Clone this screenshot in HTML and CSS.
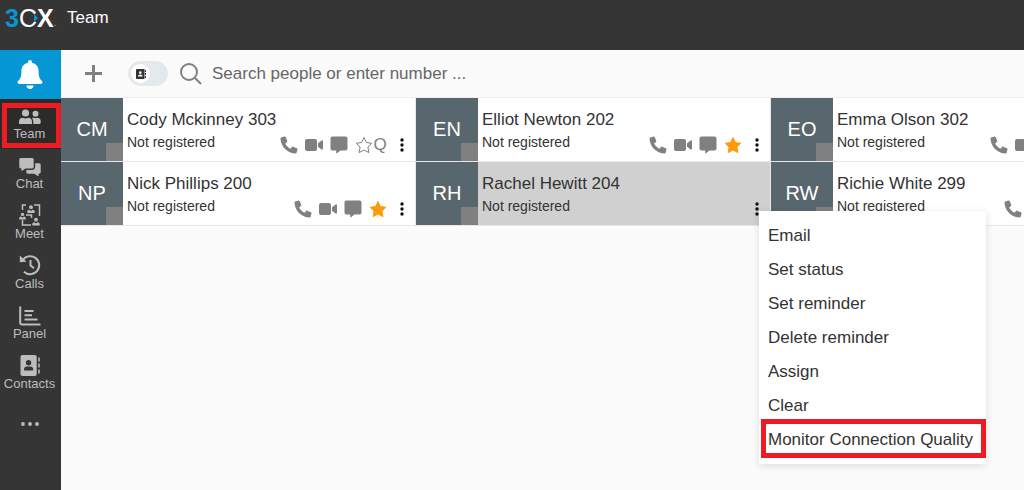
FILE: index.html
```html
<!DOCTYPE html>
<html lang="en">

<head>
    <meta charset="UTF-8">
    <meta name="viewport" content="width=device-width, initial-scale=1.0">
    <title>3CX - Team</title>
    <link rel="stylesheet" href="styles.css">
</head>

<body>

    <!-- Shared icons -->
    <svg class="sprite" aria-hidden="true">
        <symbol id="i-phone" viewBox="0 0 18 18">
            <path d="M1.2 1.4 4.6.5c.5-.1.9.1 1.1.6l1.6 3.8c.2.4.1.8-.3 1.1L5.200 7.500c1.100 2.300 3 4.200 5.300 5.300l1.500-1.800c.3-.4.7-.5 1.100-.3l3.800 1.600c.5.2.7.6.6 1.100l-.9 3.400c-.1.5-.4.7-.9.7C7.500 17.500.5 10.500.5 2.300c0-.4.3-.8.7-.9Z"/>
        </symbol>
        <symbol id="i-video" viewBox="0 0 18 18">
            <rect x="0" y="3" width="12" height="12" rx="2"/>
            <path d="M13 7.300 16.600 4.500c.6-.4 1.400 0 1.400.7v7.600c0 .7-.8 1.100-1.400.7L13 10.700Z"/>
        </symbol>
        <symbol id="i-chat" viewBox="0 0 18 18">
            <path d="M2.500.5h13c1.200 0 2 .8 2 2v10c0 1.200-.8 2-2 2h-5L7 17.200c-.4.3-.8.100-.8-.4v-2.300H2.500c-1.200 0-2-.8-2-2v-10c0-1.200.8-2 2-2Z"/>
        </symbol>
        <symbol id="i-star" viewBox="0 0 18 18">
            <path stroke-linejoin="round" d="m9 1.500 2.400 5 5.400.8-3.900 3.800 1 5.500L9 14l-4.900 2.600 1-5.500-3.900-3.800 5.400-.8Z"/>
        </symbol>
        <symbol id="i-dots" viewBox="0 0 4 14">
            <circle cx="2" cy="2" r="1.700"/>
            <circle cx="2" cy="7" r="1.700"/>
            <circle cx="2" cy="12" r="1.700"/>
        </symbol>
        <symbol id="i-person" viewBox="0 0 8 8">
            <circle cx="4" cy="2.200" r="1.900"/>
            <path d="M.3 8V6.700C.3 5.500 1.200 4.700 2.300 4.700L4 6l1.700-1.300c1.100 0 2 .8 2 2V8Z"/>
        </symbol>
    </svg>

    <header class="topbar">
        <a href="#" class="logo" aria-label="3CX"><span class="logo-3">3</span><span class="logo-c">C</span><span class="logo-x">X</span><span class="logo-dot">.</span></a>
        <h1>Team</h1>
    </header>

    <div class="layout">
        <nav class="sidebar">
            <button class="bell" aria-label="Notifications">
                <svg width="26" height="30" viewBox="0 0 26 30">
                    <path d="M13 0c1.200 0 2 .8 2 2v.8c4 .9 6.600 4 6.600 8.200 0 5.500 1 7.700 3.100 9.800.5.500.8 1 .8 1.500 0 .9-.7 1.700-1.800 1.700H2.300C1.200 24 .5 23.200.5 22.300c0-.5.300-1 .8-1.500 2.100-2.100 3.100-4.300 3.100-9.800 0-4.200 2.600-7.300 6.600-8.200V2c0-1.200.8-2 2-2ZM9.500 25.500h7c0 2-1.500 3.500-3.500 3.500s-3.500-1.500-3.500-3.500Z"/>
                </svg>
            </button>
            <a href="#" class="nav-item active">
                <svg width="22" height="18" viewBox="0 0 22 18">
                    <circle cx="6.500" cy="5" r="3.600"/>
                    <path d="M0 16v-2.500C0 11.300 1.600 9.800 3.800 9.800c1.700.8 3.700.8 5.400 0 2.200 0 3.800 1.500 3.800 3.700V16Z"/>
                    <circle cx="16.500" cy="5.800" r="3"/>
                    <path d="M14.300 16v-2.500c0-1.400-.4-2.500-1.200-3.300.4-.3.900-.4 1.500-.4 1.200.6 2.600.6 3.800 0 2 0 3.300 1.300 3.300 3.200v1.800c0 .7-.5 1.200-1.200 1.200Z"/>
                </svg>
                Team
            </a>
            <a href="#" class="nav-item">
                <svg width="22" height="18" viewBox="0 0 22 18">
                    <path d="M2 0h11c1 0 1.700.7 1.700 1.700v7c0 1-.7 1.700-1.700 1.700H6.500l-3.300 2.400c-.4.200-.7.100-.7-.4v-2H2c-1 0-1.700-.7-1.700-1.700v-7C.3.700 1 0 2 0Z"/>
                    <path d="M16.200 5.300H20c1 0 1.700.7 1.700 1.700v7c0 1-.7 1.700-1.700 1.700h-.5v2c0 .5-.3.600-.7.400l-3.300-2.400H9c-1 0-1.700-.7-1.700-1.700v-2H13c1.900 0 3.200-1.300 3.200-3.200Z"/>
                </svg>
                Chat
            </a>
            <a href="#" class="nav-item">
                <svg width="22" height="22" viewBox="0 0 22 22">
                    <path class="line" d="M3.500 6V1H7M15 1h5.500v11M3.500 16v5H12M7 11h5.500v3"/>
                    <use href="#i-person" x="8" y="1" width="8" height="8"/>
                    <use href="#i-person" x="0" y="8" width="7" height="8"/>
                    <use href="#i-person" x="13" y="13" width="8" height="9"/>
                </svg>
                Meet
            </a>
            <a href="#" class="nav-item">
                <svg width="22" height="22" viewBox="0 0 22 22">
                    <path class="line bold" d="M3.500 6.500A9 9 0 1 1 5 17.700"/>
                    <path class="line bold" d="M11.500 6v5.500l3.500 2.800"/>
                    <path d="M.8 1.500 7.500 7.700.8 8.300Z"/>
                </svg>
                Calls
            </a>
            <a href="#" class="nav-item">
                <svg width="22" height="20" viewBox="0 0 22 20">
                    <path class="line bold" d="M1.200.5v16c0 1.200.8 2 2 2h18.300M5.500 5h9M5.500 9.200h7.500M5.500 13.500h13"/>
                </svg>
                Panel
            </a>
            <a href="#" class="nav-item">
                <svg width="22" height="21" viewBox="0 0 22 21">
                    <path fill-rule="evenodd" d="M3.500 0h12.200c1.200 0 2 .8 2 2v17c0 1.200-.8 2-2 2H3.500c-1.200 0-2-.8-2-2V2c0-1.200.8-2 2-2Zm6.100 5a2.700 2.700 0 1 0 0 5.400 2.700 2.700 0 0 0 0-5.400ZM5 15.500h9.200v-1c0-1.700-1.200-2.900-2.900-2.900H7.900C6.200 11.600 5 12.800 5 14.500Z"/>
                    <path class="line" stroke-dasharray="4 2" d="M20 2.500v16"/>
                </svg>
                Contacts
            </a>
            <button class="more" aria-label="More">
                <svg width="18" height="4" viewBox="0 0 18 4">
                    <circle cx="2" cy="2" r="1.900"/>
                    <circle cx="9" cy="2" r="1.900"/>
                    <circle cx="16" cy="2" r="1.900"/>
                </svg>
            </button>
        </nav>

        <main class="content">
            <div class="toolbar">
                <button class="add" aria-label="Add">
                    <svg width="17" height="17" viewBox="0 0 17 17"><path d="M8.500 0v17M0 8.500h17"/></svg>
                </button>
                <label class="switch">
                    <input type="checkbox" aria-label="Show contacts">
                    <span class="knob">
                        <svg width="10" height="10" viewBox="0 0 10 10">
                            <path fill-rule="evenodd" d="M1 0h7.500v10H1a1 1 0 0 1-1-1V1a1 1 0 0 1 1-1Zm3.300 2.200a1.300 1.300 0 1 0 0 2.700 1.300 1.300 0 0 0 0-2.700ZM2 7.500h4.600c0-1.300-.8-2-2.300-2S2 6.200 2 7.500ZM9 1h1v2H9Zm0 3h1v2H9Zm0 3h1v2H9Z"/>
                        </svg>
                    </span>
                </label>
                <label class="search">
                    <svg width="22" height="22" viewBox="0 0 22 22"><circle cx="9" cy="9" r="8"/><path d="m15 15 6 6"/></svg>
                    <input type="text" placeholder="Search people or enter number ..." aria-label="Search people or enter number">
                </label>
            </div>

            <div class="people">
                <article class="card">
                    <div class="avatar">CM</div>
                    <div class="info">
                        <h2>Cody Mckinney 303</h2>
                        <p>Not registered</p>
                    </div>
                    <div class="actions">
                        <button aria-label="Call"><svg><use href="#i-phone"/></svg></button>
                        <button aria-label="Video"><svg><use href="#i-video"/></svg></button>
                        <button aria-label="Chat"><svg><use href="#i-chat"/></svg></button>
                        <span class="group">
                            <button class="star-empty" aria-label="Favorite"><svg><use href="#i-star"/></svg></button>
                            <button class="queue">Q</button>
                        </span>
                        <button class="dots" aria-label="Options"><svg><use href="#i-dots"/></svg></button>
                    </div>
                </article>

                <article class="card">
                    <div class="avatar">EN</div>
                    <div class="info">
                        <h2>Elliot Newton 202</h2>
                        <p>Not registered</p>
                    </div>
                    <div class="actions">
                        <button aria-label="Call"><svg><use href="#i-phone"/></svg></button>
                        <button aria-label="Video"><svg><use href="#i-video"/></svg></button>
                        <button aria-label="Chat"><svg><use href="#i-chat"/></svg></button>
                        <button class="star" aria-label="Favorite"><svg><use href="#i-star"/></svg></button>
                        <button class="dots" aria-label="Options"><svg><use href="#i-dots"/></svg></button>
                    </div>
                </article>

                <article class="card">
                    <div class="avatar">EO</div>
                    <div class="info">
                        <h2>Emma Olson 302</h2>
                        <p>Not registered</p>
                    </div>
                    <div class="actions">
                        <button aria-label="Call"><svg><use href="#i-phone"/></svg></button>
                        <button aria-label="Video"><svg><use href="#i-video"/></svg></button>
                        <button aria-label="Chat"><svg><use href="#i-chat"/></svg></button>
                        <span class="group">
                            <button class="star-empty" aria-label="Favorite"><svg><use href="#i-star"/></svg></button>
                            <button class="queue" aria-label="Queue"></button>
                        </span>
                        <button class="dots" aria-label="Options"><svg><use href="#i-dots"/></svg></button>
                    </div>
                </article>

                <article class="card">
                    <div class="avatar">NP</div>
                    <div class="info">
                        <h2>Nick Phillips 200</h2>
                        <p>Not registered</p>
                    </div>
                    <div class="actions">
                        <button aria-label="Call"><svg><use href="#i-phone"/></svg></button>
                        <button aria-label="Video"><svg><use href="#i-video"/></svg></button>
                        <button aria-label="Chat"><svg><use href="#i-chat"/></svg></button>
                        <button class="star" aria-label="Favorite"><svg><use href="#i-star"/></svg></button>
                        <button class="dots" aria-label="Options"><svg><use href="#i-dots"/></svg></button>
                    </div>
                </article>

                <article class="card selected">
                    <div class="avatar">RH</div>
                    <div class="info">
                        <h2>Rachel Hewitt 204</h2>
                        <p>Not registered</p>
                    </div>
                    <div class="actions">
                        <button class="dots" aria-label="Options"><svg><use href="#i-dots"/></svg></button>
                    </div>
                    <ul class="menu">
                        <li><button>Email</button></li>
                        <li><button>Set status</button></li>
                        <li><button>Set reminder</button></li>
                        <li><button>Delete reminder</button></li>
                        <li><button>Assign</button></li>
                        <li><button>Clear</button></li>
                        <li class="marked"><button>Monitor Connection Quality</button></li>
                    </ul>
                </article>

                <article class="card">
                    <div class="avatar">RW</div>
                    <div class="info">
                        <h2>Richie White 299</h2>
                        <p>Not registered</p>
                    </div>
                    <div class="actions">
                        <button aria-label="Call"><svg><use href="#i-phone"/></svg></button>
                        <button aria-label="Video"><svg><use href="#i-video"/></svg></button>
                        <button aria-label="Chat"><svg><use href="#i-chat"/></svg></button>
                        <button class="star" aria-label="Favorite"><svg><use href="#i-star"/></svg></button>
                        <button class="dots" aria-label="Options"><svg><use href="#i-dots"/></svg></button>
                    </div>
                </article>
            </div>
        </main>
    </div>

</body>

</html>
```
FILE: styles.css
```css
* {
    box-sizing: border-box;
}

body {
    margin: 0;
    min-height: 100vh;
    display: flex;
    flex-direction: column;
    font-family: "Liberation Sans", Arial, sans-serif;
    font-size: 17px;
    color: #333;
    background: #fbfbfb;
}

button {
    padding: 0;
    border: none;
    background: none;
    font: inherit;
    color: inherit;
    cursor: pointer;
}

svg {
    display: block;
    fill: currentColor;
}

.sprite {
    position: absolute;
    width: 0;
    height: 0;
}

/* Header */
.topbar {
    display: flex;
    height: 50px;
    padding: 6px 5px;
    gap: 11px;
    color: white;
    background: #353535;
}

.topbar h1 {
    margin: 0;
    font-size: 17px;
    font-weight: normal;
    line-height: 24px;
}

.logo {
    position: relative;
    display: flex;
    width: 51px;
    font-size: 25px;
    line-height: 25px;
    color: white;
    text-decoration: none;
}

.logo-3,
.logo-x {
    font-weight: bold;
}

.logo-3 {
    color: #0596d4;
}

.logo-dot {
    font-size: 10px;
    line-height: 34px;
    color: #999;
}

/* blue arrow between the C and the X */
.logo::after {
    content: "";
    position: absolute;
    top: 8px;
    left: 29px;
    border: 4px solid transparent;
    border-left-color: #0596d4;
    border-right: none;
}

/* Sidebar */
.layout {
    flex: 1;
    display: flex;
}

.sidebar {
    flex: none;
    display: flex;
    flex-direction: column;
    width: 61px;
    color: #bdbdbd;
    background: #353535;
}

.bell,
.nav-item,
.more {
    display: flex;
    justify-content: center;
    align-items: center;
    height: 50px;
    padding-right: 2px;
}

.bell {
    height: 49px;
    color: white;
    background: #0596d4;
}

.nav-item {
    position: relative;
    flex-direction: column;
    justify-content: flex-end;
    padding-bottom: 7px;
    font-size: 13px;
    line-height: 16px;
    color: #bdbdbd;
    text-decoration: none;
}

.nav-item.active {
    background: #2d2b2a;
}

.nav-item.active::after {
    content: "";
    position: absolute;
    inset: 4px 0 1px 2px;
    border: 5px solid #ed1c24;
}

.line {
    fill: none;
    stroke: currentColor;
    stroke-width: 1.5;
}

.line.bold {
    stroke-width: 2;
}

/* Toolbar */
.content {
    flex: 1;
    min-width: 0;
    overflow: hidden;
}

.toolbar {
    display: flex;
    align-items: center;
    height: 48px;
    padding: 0 24px;
    color: #808080;
    border-bottom: 1px solid #eee;
}

.add {
    margin-right: 26px;
}

.add svg,
.search svg {
    fill: none;
    stroke: currentColor;
    stroke-width: 2;
}

.add svg {
    stroke-width: 3;
}

.switch {
    display: flex;
    width: 40px;
    height: 25px;
    margin-right: 12px;
    padding: 3px;
    border-radius: 13px;
    background: #e4e9eb;
    cursor: pointer;
}

.switch input {
    position: absolute;
    opacity: 0;
    margin: 0;
}

.knob {
    display: flex;
    justify-content: center;
    align-items: center;
    width: 19px;
    height: 19px;
    border-radius: 50%;
    color: #333;
    background: white;
}

.switch input:checked + .knob {
    margin-left: auto;
}

.search {
    flex: 1;
    display: flex;
    align-items: center;
    gap: 10px;
}

.search input {
    flex: 1;
    min-width: 0;
    padding: 0;
    border: none;
    outline: none;
    background: none;
    font: inherit;
    color: #333;
}

.search input::placeholder {
    color: #666;
    opacity: 1;
}

/* People */
.people {
    display: grid;
    grid-template-columns: repeat(3, 355px);
}

.card {
    position: relative;
    display: flex;
    height: 64px;
    border-right: 1px solid #e8e8e8;
    border-bottom: 1px solid #e8e8e8;
    background: white;
}

.card.selected {
    z-index: 1;
    background: #d0d0d0;
}

.avatar {
    flex: none;
    position: relative;
    width: 62px;
    font-size: 20px;
    line-height: 62px;
    text-align: center;
    color: white;
    background: #58666d;
}

/* presence marker */
.avatar::after {
    content: "";
    position: absolute;
    right: 0;
    bottom: 0;
    width: 17px;
    height: 18px;
    background: #808080;
}

.info {
    flex: 1;
    padding: 10px 0 0 4px;
}

.info h2 {
    margin: 0;
    font-size: 17px;
    font-weight: normal;
    line-height: 24px;
    white-space: nowrap;
}

.info p {
    margin: 0;
    font-size: 14px;
    line-height: 20px;
}

.actions {
    display: flex;
    align-items: center;
    align-self: flex-end;
    gap: 7px;
    height: 18px;
    margin: 0 11px 7px 0;
    color: #808080;
}

.actions svg {
    width: 18px;
    height: 18px;
}

.group {
    display: flex;
    align-items: center;
}

.star {
    color: #ff9a0e;
}

.star svg {
    stroke: currentColor;
}

.star-empty svg {
    fill: none;
    stroke: currentColor;
}

.queue {
    width: 14px;
    line-height: 18px;
}

.dots {
    margin-left: 6px;
    color: #111;
}

.actions .dots svg {
    width: 4px;
    height: 14px;
}

/* Context menu */
.menu {
    position: absolute;
    top: 49px;
    left: 343px;
    width: 227px;
    margin: 0;
    padding: 8px 0 7px;
    list-style: none;
    background: white;
    box-shadow: 0 2px 8px rgba(0, 0, 0, 0.12);
}

.menu li {
    position: relative;
}

.menu button {
    width: 100%;
    padding-left: 9px;
    line-height: 34px;
    text-align: left;
    white-space: nowrap;
}

.menu .marked::after {
    content: "";
    position: absolute;
    inset: -4px 0 -1px 2px;
    border: 5px solid #ed1c24;
    pointer-events: none;
}
```
